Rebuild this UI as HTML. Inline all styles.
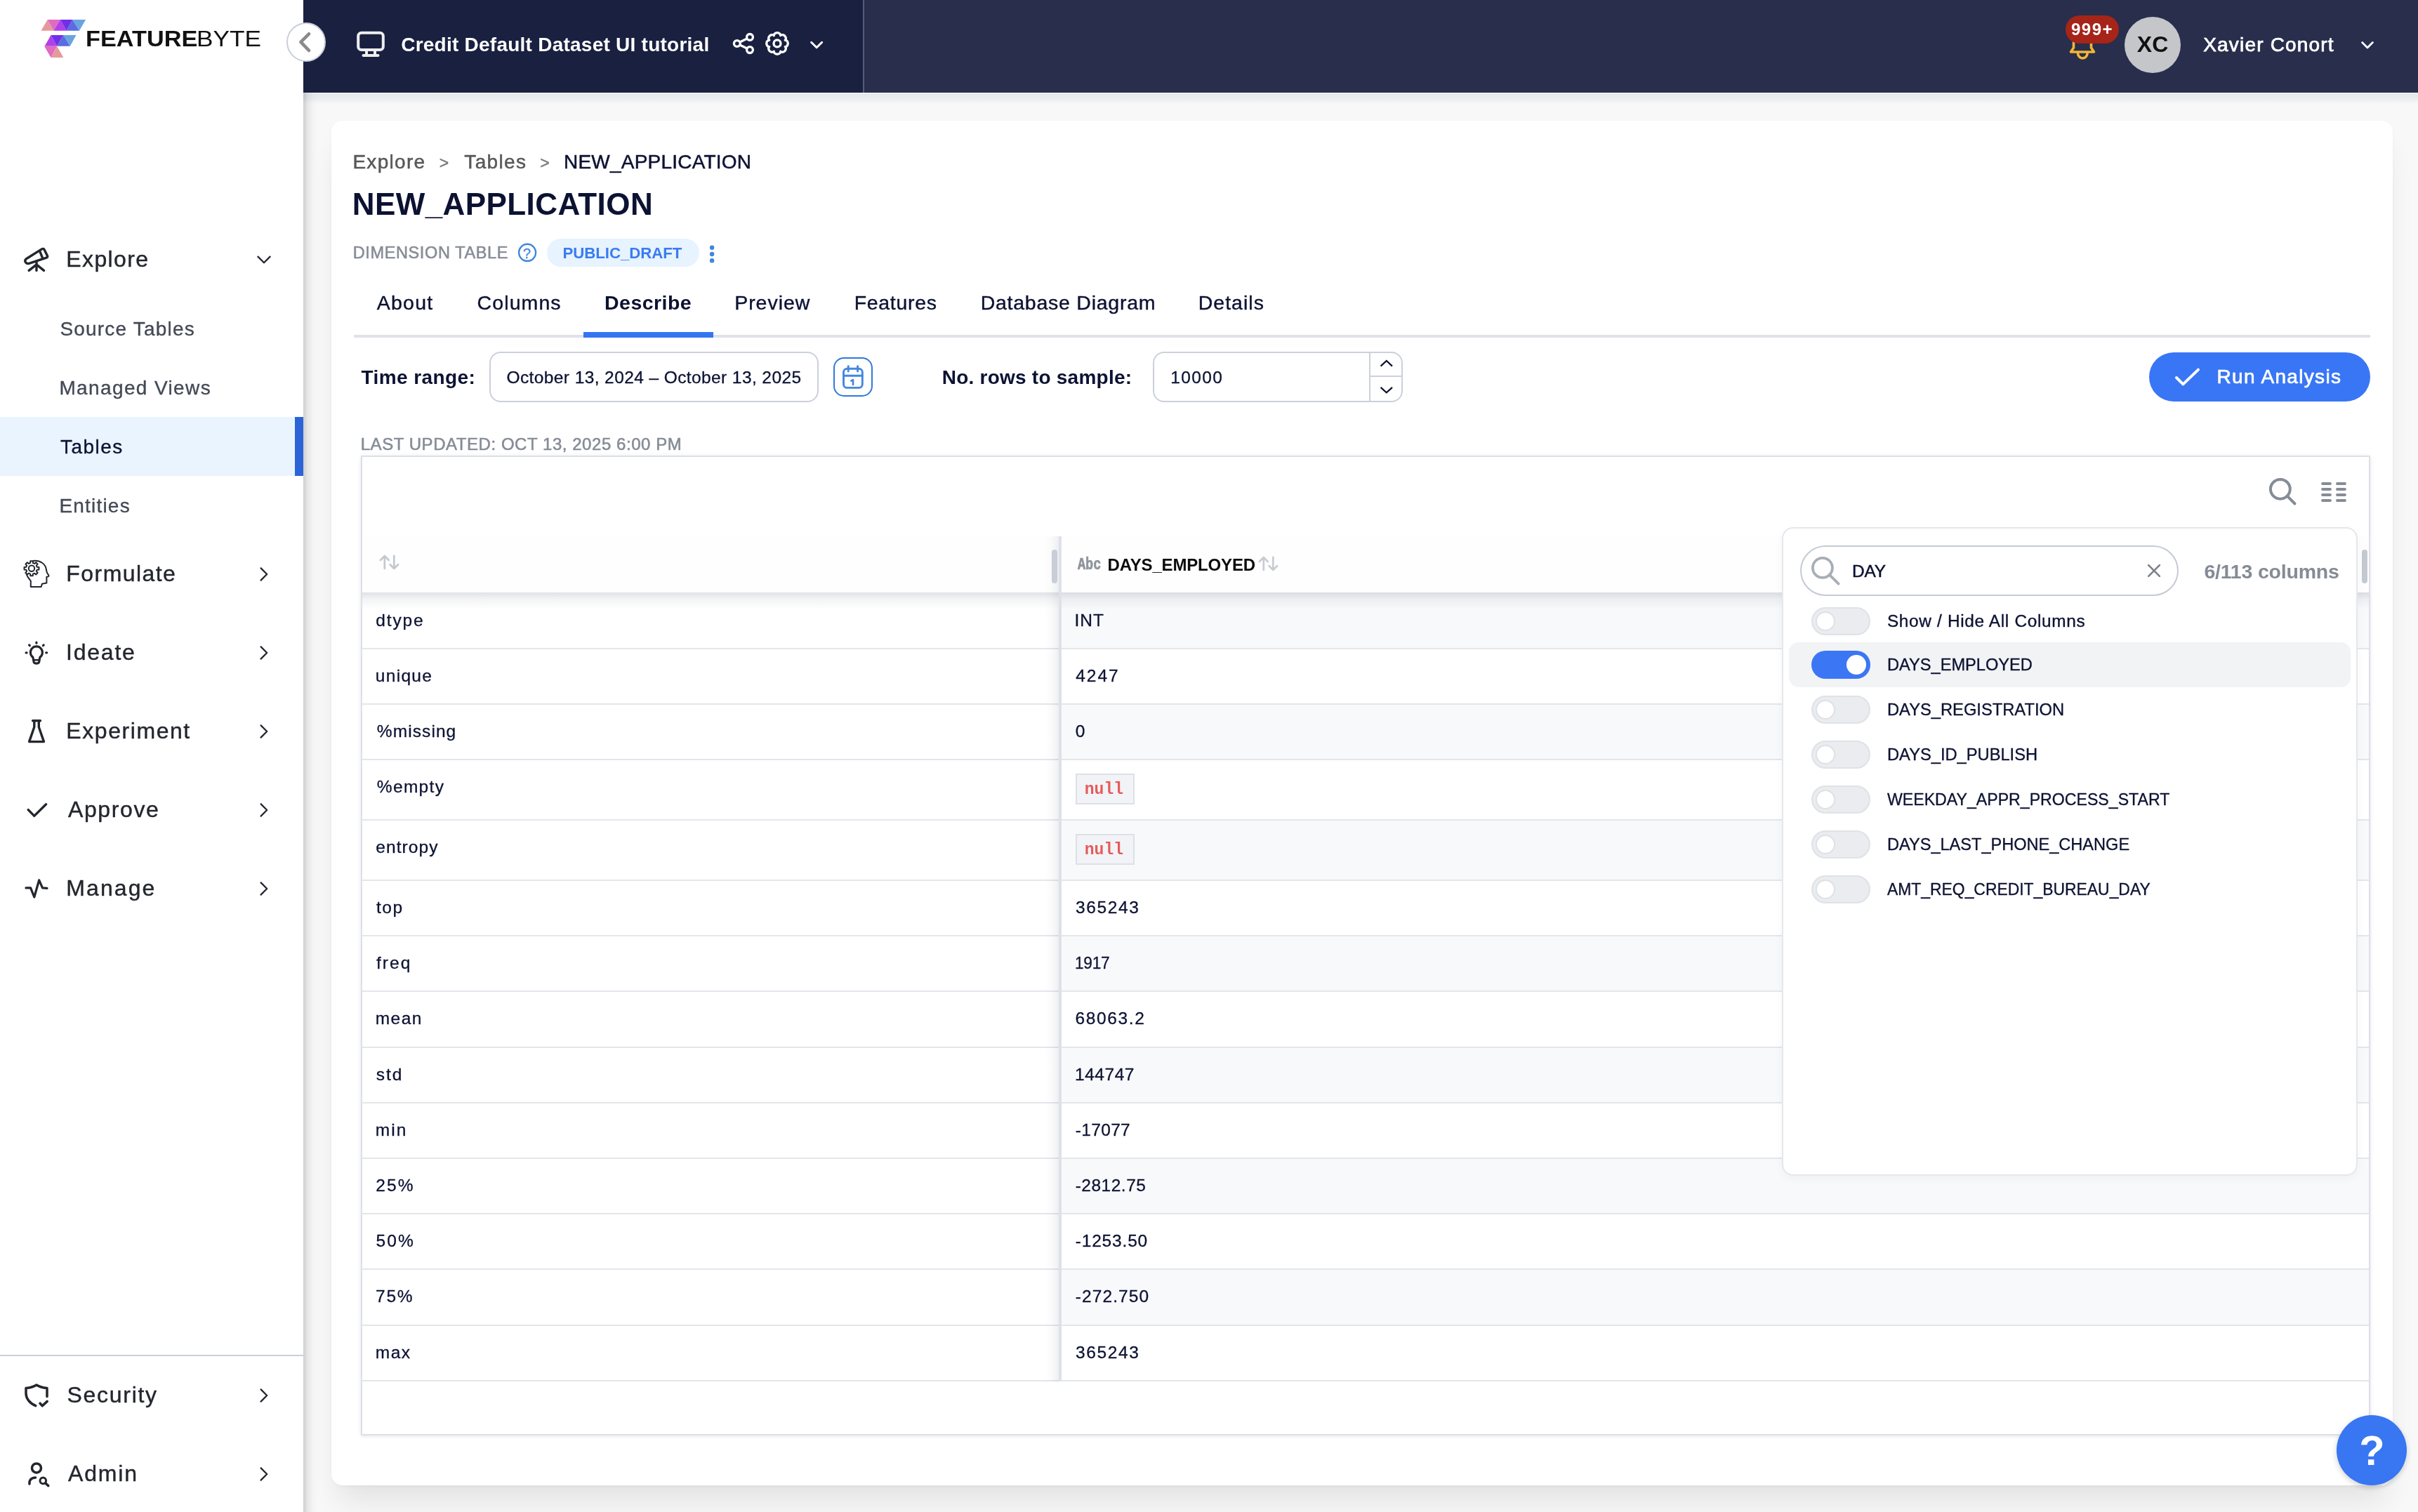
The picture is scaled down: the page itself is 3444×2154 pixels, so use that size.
<!DOCTYPE html>
<html><head><meta charset="utf-8"><title>NEW_APPLICATION</title>
<style>
html,body{margin:0;padding:0;}
body{width:3444px;height:2154px;overflow:hidden;background:#f8f8f8;position:relative;font-family:"Liberation Sans",sans-serif;}
.b{position:absolute;box-sizing:border-box;}
.t{position:absolute;white-space:nowrap;margin:0;padding:0;}
svg{overflow:visible;}
</style></head><body>
<div id="app" style="position:absolute;left:0;top:0;width:3444px;height:2154px;will-change:transform;">
<div class="b" style="left:432px;top:132px;width:3012px;height:16px;background:linear-gradient(to bottom,#e5e7ec 0%,#e9ebef 45%,#f8f8f8 100%);"></div>
<div class="b" style="left:432px;top:132px;width:3012px;height:1px;background:#fbfbfc;"></div>
<div class="b" style="left:472px;top:172px;width:2936px;height:1944px;background:#fff;border-radius:16px;box-shadow:0 2px 6px rgba(0,0,0,0.04),0 32px 42px -10px rgba(0,0,0,0.09);"></div>
<div class="b" style="left:432px;top:132px;width:20px;height:2022px;background:linear-gradient(to right,rgba(0,0,0,0.17) 0%,rgba(0,0,0,0.07) 30%,rgba(0,0,0,0.02) 65%,rgba(0,0,0,0) 100%);"></div>
<div class="b" style="left:432px;top:0px;width:797px;height:132px;background:#1a2040;"></div>
<div class="b" style="left:1229px;top:0px;width:2px;height:132px;background:#565c75;"></div>
<div class="b" style="left:1231px;top:0px;width:2213px;height:132px;background:#282e4c;"></div>
<svg class="b" style="left:500px;top:40px;" width="56" height="48" viewBox="0 0 56 48" fill="none"><rect x="10.2" y="6.8" width="35.6" height="24.2" rx="4.5" stroke="#eee" stroke-width="4"/><path d="M22 31v7M34 31v7" stroke="#eee" stroke-width="4"/><path d="M17.5 39.1h21" stroke="#eee" stroke-width="4" stroke-linecap="round"/></svg>
<div class="t" style="left:571.18px;top:46.80px;font-size:28px;line-height:34px;color:#fff;font-family:'Liberation Sans', sans-serif;font-weight:700;letter-spacing:0.245px;">Credit Default Dataset UI tutorial</div>
<svg class="b" style="left:1040px;top:44px;" width="40" height="40" viewBox="0 0 40 40" fill="none"><g stroke="#fff" stroke-width="3.3"><circle cx="9.8" cy="18" r="4.4"/><circle cx="28" cy="8.9" r="4.4"/><circle cx="28" cy="27.1" r="4.4"/><path d="M13.8 16 L24 10.9M13.8 20 L24 25.1"/></g></svg>
<svg class="b" style="left:1087px;top:42px;" width="40" height="40" viewBox="0 0 40 40" fill="none"><path d="M20.00 4.70 L20.50 4.72 L20.99 4.79 L21.48 4.90 L21.95 5.06 L22.42 5.26 L22.86 5.50 L23.29 5.80 L23.69 6.14 L24.05 6.53 L24.38 7.00 L24.64 7.57 L24.67 8.63 L25.44 7.90 L26.03 7.68 L26.58 7.58 L27.12 7.56 L27.65 7.60 L28.16 7.69 L28.64 7.84 L29.11 8.02 L29.56 8.25 L29.98 8.51 L30.38 8.82 L30.75 9.15 L31.08 9.52 L31.39 9.92 L31.65 10.34 L31.88 10.79 L32.06 11.26 L32.21 11.74 L32.30 12.25 L32.34 12.78 L32.32 13.32 L32.22 13.87 L32.00 14.46 L31.27 15.23 L32.33 15.26 L32.90 15.52 L33.37 15.85 L33.76 16.21 L34.10 16.61 L34.40 17.04 L34.64 17.48 L34.84 17.95 L35.00 18.42 L35.11 18.91 L35.18 19.40 L35.20 19.90 L35.18 20.40 L35.11 20.89 L35.00 21.38 L34.84 21.85 L34.64 22.32 L34.40 22.76 L34.10 23.19 L33.76 23.59 L33.37 23.95 L32.90 24.28 L32.33 24.54 L31.27 24.57 L32.00 25.34 L32.22 25.93 L32.32 26.48 L32.34 27.02 L32.30 27.55 L32.21 28.06 L32.06 28.54 L31.88 29.01 L31.65 29.46 L31.39 29.88 L31.08 30.28 L30.75 30.65 L30.38 30.98 L29.98 31.29 L29.56 31.55 L29.11 31.78 L28.64 31.96 L28.16 32.11 L27.65 32.20 L27.12 32.24 L26.58 32.22 L26.03 32.12 L25.44 31.90 L24.67 31.17 L24.64 32.23 L24.38 32.80 L24.05 33.27 L23.69 33.66 L23.29 34.00 L22.86 34.30 L22.42 34.54 L21.95 34.74 L21.48 34.90 L20.99 35.01 L20.50 35.08 L20.00 35.10 L19.50 35.08 L19.01 35.01 L18.52 34.90 L18.05 34.74 L17.58 34.54 L17.14 34.30 L16.71 34.00 L16.31 33.66 L15.95 33.27 L15.62 32.80 L15.36 32.23 L15.33 31.17 L14.56 31.90 L13.97 32.12 L13.42 32.22 L12.88 32.24 L12.35 32.20 L11.84 32.11 L11.36 31.96 L10.89 31.78 L10.44 31.55 L10.02 31.29 L9.62 30.98 L9.25 30.65 L8.92 30.28 L8.61 29.88 L8.35 29.46 L8.12 29.01 L7.94 28.54 L7.79 28.06 L7.70 27.55 L7.66 27.02 L7.68 26.48 L7.78 25.93 L8.00 25.34 L8.73 24.57 L7.67 24.54 L7.10 24.28 L6.63 23.95 L6.24 23.59 L5.90 23.19 L5.60 22.76 L5.36 22.32 L5.16 21.85 L5.00 21.38 L4.89 20.89 L4.82 20.40 L4.80 19.90 L4.82 19.40 L4.89 18.91 L5.00 18.42 L5.16 17.95 L5.36 17.48 L5.60 17.04 L5.90 16.61 L6.24 16.21 L6.63 15.85 L7.10 15.52 L7.67 15.26 L8.73 15.23 L8.00 14.46 L7.78 13.87 L7.68 13.32 L7.66 12.78 L7.70 12.25 L7.79 11.74 L7.94 11.26 L8.12 10.79 L8.35 10.34 L8.61 9.92 L8.92 9.52 L9.25 9.15 L9.62 8.82 L10.02 8.51 L10.44 8.25 L10.89 8.02 L11.36 7.84 L11.84 7.69 L12.35 7.60 L12.88 7.56 L13.42 7.58 L13.97 7.68 L14.56 7.90 L15.33 8.63 L15.36 7.57 L15.62 7.00 L15.95 6.53 L16.31 6.14 L16.71 5.80 L17.14 5.50 L17.58 5.26 L18.05 5.06 L18.52 4.90 L19.01 4.79 L19.50 4.72Z" stroke="#fff" stroke-width="3.3" stroke-linejoin="round"/><circle cx="20" cy="19.9" r="5" stroke="#fff" stroke-width="3.3"/></svg>
<svg class="b" style="left:1150px;top:54px;" width="28" height="20" viewBox="0 0 28 20" fill="none"><path d="M5.6 6.3 L13.15 13.7 L20.7 6.3" stroke="#fff" stroke-width="3" stroke-linecap="round" stroke-linejoin="round"/></svg>
<svg class="b" style="left:2940px;top:40px;" width="52" height="50" viewBox="0 0 52 50" fill="none"><g stroke="#f2b534" stroke-width="3.6" stroke-linejoin="round" stroke-linecap="round"><path d="M13.5 20 V28 L9.5 34 H42.5 L38.5 28 V20"/><path d="M19.5 35.5 a6.8 7.5 0 0 0 13.6 0"/></g></svg>
<div class="b" style="left:2942px;top:22px;width:76px;height:40px;background:#a62418;border-radius:20px;"></div>
<div class="t" style="left:2949.96px;top:26.70px;font-size:24px;line-height:29px;color:#fff;font-family:'Liberation Sans', sans-serif;font-weight:700;letter-spacing:1.500px;">999+</div>
<div class="b" style="left:3026px;top:24px;width:80px;height:80px;background:#c5c6ca;border-radius:50%;"></div>
<div class="t" style="left:3043.68px;top:44.40px;font-size:32px;line-height:39px;color:#111;font-family:'Liberation Sans', sans-serif;font-weight:700;letter-spacing:0.220px;">XC</div>
<div class="t" style="left:3138.17px;top:47.20px;font-size:28px;line-height:34px;color:#fff;font-family:'Liberation Sans', sans-serif;letter-spacing:1.191px;-webkit-text-stroke:0.75px #fff;">Xavier Conort</div>
<svg class="b" style="left:3358px;top:54px;" width="28" height="20" viewBox="0 0 28 20" fill="none"><path d="M6.6 6.6 L14 13.9 L21.4 6.6" stroke="#fff" stroke-width="2.8" stroke-linecap="round" stroke-linejoin="round"/></svg>
<div class="b" style="left:0px;top:0px;width:432px;height:2154px;background:#fff;"></div>
<svg class="b" style="left:0px;top:0px;" width="140" height="100" viewBox="0 0 140 100" fill="none"><polygon points="58.5,43.7 67.7,28.1 76.5,43.7" fill="#e59a9a"/><polygon points="67.7,28.1 85.7,28.1 76.5,43.7" fill="#e06bc0"/><polygon points="76.5,43.7 85.7,28.1 94.7,43.7" fill="#b040e8"/><polygon points="85.7,28.1 103.5,28.1 94.7,43.7" fill="#7030e8"/><polygon points="94.7,43.7 103.5,28.1 113,43.7" fill="#5b6be0"/><polygon points="103.5,28.1 122,28.1 113,43.7" fill="#68a4e0"/><polygon points="63.6,65.7 72.5,50.1 81.1,65.7" fill="#b040e8"/><polygon points="72.5,50.1 90.5,50.1 81.1,65.7" fill="#7030e8"/><polygon points="81.1,65.7 90.5,50.1 99.8,65.7" fill="#5b6be0"/><polygon points="90.5,50.1 108.5,50.1 99.8,65.7" fill="#68a4e0"/><polygon points="63.1,65.7 81.1,65.7 72.5,81.9" fill="#e06bc0"/><polygon points="72.5,81.9 81.1,65.7 90.4,81.9" fill="#e59a9a"/></svg>
<div class="t" style="left:121.91px;top:36.50px;font-size:31px;line-height:38px;color:#111;font-family:'Liberation Sans', sans-serif;font-weight:700;transform:scaleX(1.1056);transform-origin:0 0;">FEATURE</div>
<div class="t" style="left:280.24px;top:36.50px;font-size:31px;line-height:38px;color:#111;font-family:'Liberation Sans', sans-serif;transform:scaleX(1.1360);transform-origin:0 0;">BYTE</div>
<div class="b" style="left:408px;top:32px;width:56px;height:56px;background:#fff;border:2px solid #c8cfda;border-radius:50%;"></div>
<svg class="b" style="left:408px;top:32px;" width="56" height="56" viewBox="0 0 56 56" fill="none"><path d="M32 16.3 L20.4 27.9 L32 39.9" stroke="#8a8a8a" stroke-width="4.6" stroke-linecap="round" stroke-linejoin="round"/></svg>
<div class="t" style="left:94.36px;top:350.40px;font-size:32px;line-height:39px;color:#23262d;font-family:'Liberation Sans', sans-serif;letter-spacing:1.370px;-webkit-text-stroke:0.4px #23262d;">Explore</div>
<svg class="b" style="left:362px;top:360px;" width="28" height="20" viewBox="0 0 28 20" fill="none"><path d="M5.4 5.6 L14 14.2 L22.6 5.6" stroke="#23262d" stroke-width="2.3" stroke-linecap="round" stroke-linejoin="round"/></svg>
<svg class="b" style="left:30px;top:348px;" width="44" height="44" viewBox="0 0 44 44" fill="none"><g stroke="#23262d" stroke-width="3.4" stroke-linejoin="round" stroke-linecap="round" transform="translate(-30,-348)"><path d="M37.4 368.8 L59.5 354.9 Q62 353.5 63.3 356 L67.4 364.2 Q68.4 366.3 66.1 367.1 L42 375.2 Q37.8 376.4 36.1 373 Q35 370.4 37.4 368.8Z"/><path d="M56.6 357.6 L60.6 367.6"/><path d="M52 372.6 V385.4M52 376.9 L41.2 385.4M52 376.9 L62.5 385.4"/></g></svg>
<div class="b" style="left:0px;top:594px;width:432px;height:84px;background:#e9f4fe;"></div>
<div class="b" style="left:420px;top:594px;width:12px;height:84px;background:#2c64d8;"></div>
<div class="t" style="left:85.44px;top:451.50px;font-size:28px;line-height:34px;color:#434955;font-family:'Liberation Sans', sans-serif;letter-spacing:1.190px;-webkit-text-stroke:0.35px #434955;">Source Tables</div>
<div class="t" style="left:84.39px;top:535.50px;font-size:28px;line-height:34px;color:#434955;font-family:'Liberation Sans', sans-serif;letter-spacing:1.380px;-webkit-text-stroke:0.35px #434955;">Managed Views</div>
<div class="t" style="left:86.07px;top:619.50px;font-size:28px;line-height:34px;color:#0c1232;font-family:'Liberation Sans', sans-serif;letter-spacing:1.438px;-webkit-text-stroke:0.35px #0c1232;">Tables</div>
<div class="t" style="left:84.39px;top:703.50px;font-size:28px;line-height:34px;color:#434955;font-family:'Liberation Sans', sans-serif;letter-spacing:1.207px;-webkit-text-stroke:0.35px #434955;">Entities</div>
<div class="t" style="left:94.36px;top:798.20px;font-size:32px;line-height:39px;color:#23262d;font-family:'Liberation Sans', sans-serif;letter-spacing:1.438px;-webkit-text-stroke:0.4px #23262d;">Formulate</div>
<svg class="b" style="left:366px;top:806px;" width="20" height="24" viewBox="0 0 20 24" fill="none"><path d="M5.6 3.4 L14.2 12 L5.6 20.6" stroke="#23262d" stroke-width="2.3" stroke-linecap="round" stroke-linejoin="round"/></svg>
<div class="t" style="left:94.04px;top:910.20px;font-size:32px;line-height:39px;color:#23262d;font-family:'Liberation Sans', sans-serif;letter-spacing:1.772px;-webkit-text-stroke:0.4px #23262d;">Ideate</div>
<svg class="b" style="left:366px;top:918px;" width="20" height="24" viewBox="0 0 20 24" fill="none"><path d="M5.6 3.4 L14.2 12 L5.6 20.6" stroke="#23262d" stroke-width="2.3" stroke-linecap="round" stroke-linejoin="round"/></svg>
<div class="t" style="left:94.36px;top:1022.20px;font-size:32px;line-height:39px;color:#23262d;font-family:'Liberation Sans', sans-serif;letter-spacing:1.560px;-webkit-text-stroke:0.4px #23262d;">Experiment</div>
<svg class="b" style="left:366px;top:1030px;" width="20" height="24" viewBox="0 0 20 24" fill="none"><path d="M5.6 3.4 L14.2 12 L5.6 20.6" stroke="#23262d" stroke-width="2.3" stroke-linecap="round" stroke-linejoin="round"/></svg>
<div class="t" style="left:96.92px;top:1134.20px;font-size:32px;line-height:39px;color:#23262d;font-family:'Liberation Sans', sans-serif;letter-spacing:1.637px;-webkit-text-stroke:0.4px #23262d;">Approve</div>
<svg class="b" style="left:366px;top:1142px;" width="20" height="24" viewBox="0 0 20 24" fill="none"><path d="M5.6 3.4 L14.2 12 L5.6 20.6" stroke="#23262d" stroke-width="2.3" stroke-linecap="round" stroke-linejoin="round"/></svg>
<div class="t" style="left:94.36px;top:1246.20px;font-size:32px;line-height:39px;color:#23262d;font-family:'Liberation Sans', sans-serif;letter-spacing:2.080px;-webkit-text-stroke:0.4px #23262d;">Manage</div>
<svg class="b" style="left:366px;top:1254px;" width="20" height="24" viewBox="0 0 20 24" fill="none"><path d="M5.6 3.4 L14.2 12 L5.6 20.6" stroke="#23262d" stroke-width="2.3" stroke-linecap="round" stroke-linejoin="round"/></svg>
<div class="t" style="left:95.56px;top:1968.20px;font-size:32px;line-height:39px;color:#23262d;font-family:'Liberation Sans', sans-serif;letter-spacing:1.703px;-webkit-text-stroke:0.4px #23262d;">Security</div>
<svg class="b" style="left:366px;top:1976px;" width="20" height="24" viewBox="0 0 20 24" fill="none"><path d="M5.6 3.4 L14.2 12 L5.6 20.6" stroke="#23262d" stroke-width="2.3" stroke-linecap="round" stroke-linejoin="round"/></svg>
<div class="t" style="left:96.92px;top:2080.20px;font-size:32px;line-height:39px;color:#23262d;font-family:'Liberation Sans', sans-serif;letter-spacing:1.880px;-webkit-text-stroke:0.4px #23262d;">Admin</div>
<svg class="b" style="left:366px;top:2088px;" width="20" height="24" viewBox="0 0 20 24" fill="none"><path d="M5.6 3.4 L14.2 12 L5.6 20.6" stroke="#23262d" stroke-width="2.3" stroke-linecap="round" stroke-linejoin="round"/></svg>
<div class="b" style="left:0px;top:1930px;width:432px;height:2px;background:#c9d0da;"></div>
<svg class="b" style="left:30px;top:794px;" width="44" height="48" viewBox="0 0 44 48" fill="none"><g stroke="#23262d" stroke-linejoin="round" stroke-linecap="round" stroke-width="2" transform="translate(-30,-794)"><path d="M47.5 799 C57 798 65 803 66 812 L66.8 815.5 L69.4 819.7 Q69.8 821 68.4 821.4 L66.4 821.8 V830.6 L59.9 831.8 L58.7 836 H43.8 V827.6 C41 824 38.5 821 37.9 818.2"/><path d="M43.07 802.04 L43.26 799.34 L46.74 799.34 L46.93 802.04 L49.13 802.95 L51.16 801.18 L53.62 803.64 L51.85 805.67 L52.76 807.87 L55.46 808.06 L55.46 811.54 L52.76 811.73 L51.85 813.93 L53.62 815.96 L51.16 818.42 L49.13 816.65 L46.93 817.56 L46.74 820.26 L43.26 820.26 L43.07 817.56 L40.87 816.65 L38.84 818.42 L36.38 815.96 L38.15 813.93 L37.24 811.73 L34.54 811.54 L34.54 808.06 L37.24 807.87 L38.15 805.67 L36.38 803.64 L38.84 801.18 L40.87 802.95Z"/><circle cx="45" cy="809.8" r="4.2"/></g></svg>
<svg class="b" style="left:30px;top:908px;" width="44" height="44" viewBox="0 0 44 44" fill="none"><g stroke="#23262d" stroke-linejoin="round" stroke-linecap="round" stroke-width="3.2" transform="translate(-30,-908)"><path d="M46.9 936.3 A8.5 8.5 0 1 1 56.9 936.3 L55.7 943 Q55.3 945.1 51.9 945.1 Q48.5 945.1 48.1 943 Z"/><path d="M48.4 940.2 H55.4" stroke-width="2.6"/><path d="M51.9 915.2 V916.2M41.6 918.9 L42.4 919.7M62.2 918.9 L61.4 919.7M37.1 929.9 H38.1M65.7 929.8 H66.7"/></g></svg>
<svg class="b" style="left:30px;top:1020px;" width="44" height="44" viewBox="0 0 44 44" fill="none"><g stroke="#23262d" stroke-linejoin="round" stroke-linecap="round" stroke-width="3.4" transform="translate(-30,-1020)"><path d="M46.6 1026.8 H57.5"/><path d="M48.8 1027 V1035.7 L41.6 1056.6 H62.5 L55.3 1035.7 V1027"/></g></svg>
<svg class="b" style="left:30px;top:1134px;" width="44" height="40" viewBox="0 0 44 40" fill="none"><g stroke="#23262d" stroke-linejoin="round" stroke-linecap="round" stroke-width="3.4" transform="translate(-30,-1134)"><path d="M40.2 1153.6 L48.8 1162.4 L65.6 1145.8"/></g></svg>
<svg class="b" style="left:30px;top:1246px;" width="44" height="40" viewBox="0 0 44 40" fill="none"><g stroke="#23262d" stroke-linejoin="round" stroke-linecap="round" stroke-width="3.2" transform="translate(-30,-1246)"><path d="M37 1264.9 H43.6 L48.8 1278 L55.7 1253.8 L60.5 1264.9 L67 1265.3"/></g></svg>
<svg class="b" style="left:30px;top:1966px;" width="44" height="44" viewBox="0 0 44 44" fill="none"><g stroke="#23262d" stroke-linejoin="round" stroke-linecap="round" stroke-width="3.5" transform="translate(-30,-1966)"><path d="M50.8 2002.6 C42 1999 37 1992 37 1985 V1977.4 C43 1977 48 1975.6 52 1973 C56 1975.6 61 1977 67 1977.4 V1989.6"/><path d="M57 1999.2 L60.3 2002.8 L67.2 1996.4"/></g></svg>
<svg class="b" style="left:30px;top:2078px;" width="48" height="44" viewBox="0 0 48 44" fill="none"><g stroke="#23262d" stroke-linejoin="round" stroke-linecap="round" stroke-width="3.5" transform="translate(-30,-2078)"><circle cx="52" cy="2091.4" r="6.5"/><path d="M42 2114 C41.4 2108 45 2105 50.6 2104.9"/><circle cx="61.3" cy="2109.4" r="4.3" stroke-width="3"/><path d="M64.6 2112.8 L68.8 2116.6"/></g></svg>
<div class="t" style="left:502.39px;top:213.90px;font-size:28px;line-height:34px;color:#585858;font-family:'Liberation Sans', sans-serif;letter-spacing:1.313px;-webkit-text-stroke:0.5px #585858;">Explore</div>
<div class="t" style="left:625.65px;top:217.60px;font-size:23px;line-height:28px;color:#7a7a7a;font-family:'Liberation Sans', sans-serif;-webkit-text-stroke:0.4px #7a7a7a;">&gt;</div>
<div class="t" style="left:661.37px;top:213.90px;font-size:28px;line-height:34px;color:#585858;font-family:'Liberation Sans', sans-serif;letter-spacing:1.338px;-webkit-text-stroke:0.5px #585858;">Tables</div>
<div class="t" style="left:769.35px;top:217.60px;font-size:23px;line-height:28px;color:#7a7a7a;font-family:'Liberation Sans', sans-serif;-webkit-text-stroke:0.4px #7a7a7a;">&gt;</div>
<div class="t" style="left:802.99px;top:213.90px;font-size:28px;line-height:34px;color:#0c1232;font-family:'Liberation Sans', sans-serif;letter-spacing:0.218px;-webkit-text-stroke:0.5px #0c1232;">NEW_APPLICATION</div>
<div class="t" style="left:501.73px;top:263.60px;font-size:44px;line-height:53px;color:#0c1232;font-family:'Liberation Sans', sans-serif;font-weight:700;letter-spacing:0.419px;">NEW_APPLICATION</div>
<div class="t" style="left:502.76px;top:346.00px;font-size:23.5px;line-height:29px;color:#868c96;font-family:'Liberation Sans', sans-serif;letter-spacing:0.619px;-webkit-text-stroke:0.55px #868c96;">DIMENSION TABLE</div>
<svg class="b" style="left:736px;top:345px;" width="30" height="30" viewBox="0 0 30 30" fill="none"><circle cx="15.1" cy="14.8" r="12" stroke="#3f85dd" stroke-width="2.4"/></svg>
<div class="t" style="left:745.00px;top:348.50px;font-size:20px;line-height:24px;color:#3f85dd;font-family:'Liberation Sans', sans-serif;-webkit-text-stroke:0.3px #3f85dd;">?</div>
<div class="b" style="left:779px;top:340px;width:217px;height:40px;background:#e7f3fe;border-radius:20px;"></div>
<div class="t" style="left:801.59px;top:346.70px;font-size:22.3px;line-height:27px;color:#3a7cf0;font-family:'Liberation Sans', sans-serif;font-weight:700;letter-spacing:-0.100px;">PUBLIC_DRAFT</div>
<svg class="b" style="left:1006px;top:346px;" width="16" height="32" viewBox="0 0 16 32" fill="none"><circle cx="8.1" cy="6.8" r="3.2" fill="#4285dc"/><circle cx="8.1" cy="16" r="3.2" fill="#4285dc"/><circle cx="8.1" cy="25.3" r="3.2" fill="#4285dc"/></svg>
<div class="t" style="left:536.73px;top:413.90px;font-size:28.5px;line-height:35px;color:#0c1232;font-family:'Liberation Sans', sans-serif;letter-spacing:1.257px;-webkit-text-stroke:0.4px #0c1232;">About</div>
<div class="t" style="left:679.58px;top:413.90px;font-size:28.5px;line-height:35px;color:#0c1232;font-family:'Liberation Sans', sans-serif;letter-spacing:1.098px;-webkit-text-stroke:0.4px #0c1232;">Columns</div>
<div class="t" style="left:861.08px;top:413.90px;font-size:28.5px;line-height:35px;color:#0c1232;font-family:'Liberation Sans', sans-serif;font-weight:700;letter-spacing:0.444px;">Describe</div>
<div class="t" style="left:1046.15px;top:413.90px;font-size:28.5px;line-height:35px;color:#0c1232;font-family:'Liberation Sans', sans-serif;letter-spacing:0.982px;-webkit-text-stroke:0.4px #0c1232;">Preview</div>
<div class="t" style="left:1216.65px;top:413.90px;font-size:28.5px;line-height:35px;color:#0c1232;font-family:'Liberation Sans', sans-serif;letter-spacing:0.692px;-webkit-text-stroke:0.4px #0c1232;">Features</div>
<div class="t" style="left:1396.65px;top:413.90px;font-size:28.5px;line-height:35px;color:#0c1232;font-family:'Liberation Sans', sans-serif;letter-spacing:0.752px;-webkit-text-stroke:0.4px #0c1232;">Database Diagram</div>
<div class="t" style="left:1706.65px;top:413.90px;font-size:28.5px;line-height:35px;color:#0c1232;font-family:'Liberation Sans', sans-serif;letter-spacing:1.035px;-webkit-text-stroke:0.4px #0c1232;">Details</div>
<div class="b" style="left:504px;top:477px;width:2872px;height:4px;background:#dfe2e8;"></div>
<div class="b" style="left:831px;top:473px;width:185px;height:8px;background:#3575f0;"></div>
<div class="t" style="left:514.45px;top:520.50px;font-size:28px;line-height:34px;color:#0c1232;font-family:'Liberation Sans', sans-serif;font-weight:700;letter-spacing:0.431px;">Time range:</div>
<div class="b" style="left:697px;top:501px;width:469px;height:72px;border:2px solid #cbd0da;border-radius:16px;background:#fff;"></div>
<div class="t" style="left:721.44px;top:522.70px;font-size:24.5px;line-height:30px;color:#0c1232;font-family:'Liberation Sans', sans-serif;letter-spacing:0.404px;-webkit-text-stroke:0.3px #0c1232;">October 13, 2024 – October 13, 2025</div>
<div class="b" style="left:1187px;top:509px;width:56px;height:56px;border:2px solid #3079db;border-radius:15px;background:#fff;"></div>
<svg class="b" style="left:1187px;top:509px;" width="56" height="56" viewBox="0 0 56 56" fill="none"><g stroke="#4487e0" stroke-width="2.9" stroke-linecap="round" stroke-linejoin="round"><rect x="14.5" y="16.2" width="26.8" height="27.2" rx="5"/><path d="M14.5 26.2 H41.3M21.2 12.8 V20.1M34.6 12.8 V20.1"/><path d="M25.4 33.4 L28 32.2 V39" stroke-width="2.7"/></g></svg>
<div class="t" style="left:1341.71px;top:520.50px;font-size:28px;line-height:34px;color:#0c1232;font-family:'Liberation Sans', sans-serif;font-weight:700;letter-spacing:0.238px;">No. rows to sample:</div>
<div class="b" style="left:1642px;top:501px;width:356px;height:72px;border:2px solid #cbd0da;border-radius:16px;background:#fff;"></div>
<div class="b" style="left:1950px;top:503px;width:2px;height:68px;background:#cbd0da;"></div>
<div class="b" style="left:1952px;top:535px;width:44px;height:2px;background:#cbd0da;"></div>
<div class="t" style="left:1667.16px;top:522.70px;font-size:24.5px;line-height:30px;color:#0c1232;font-family:'Liberation Sans', sans-serif;letter-spacing:1.412px;-webkit-text-stroke:0.3px #0c1232;">10000</div>
<svg class="b" style="left:1960px;top:506px;" width="30" height="24" viewBox="0 0 30 24" fill="none"><path d="M6.6 15.6 L14.8 8 L23 15.6" stroke="#0b0f2e" stroke-width="2.2" stroke-linejoin="miter"/></svg>
<svg class="b" style="left:1960px;top:544px;" width="30" height="24" viewBox="0 0 30 24" fill="none"><path d="M6.6 7.9 L14.8 15.3 L23 7.9" stroke="#0b0f2e" stroke-width="2.2" stroke-linejoin="miter"/></svg>
<div class="b" style="left:3061px;top:502px;width:315px;height:70px;background:#3876f5;border-radius:35px;"></div>
<svg class="b" style="left:3094px;top:518px;" width="44" height="38" viewBox="0 0 44 38" fill="none"><path d="M6 20 L15.4 29.4 L37 8.6" stroke="#fff" stroke-width="4" stroke-linecap="round" stroke-linejoin="round"/></svg>
<div class="t" style="left:3157.49px;top:520.10px;font-size:28px;line-height:34px;color:#fff;font-family:'Liberation Sans', sans-serif;letter-spacing:1.332px;-webkit-text-stroke:0.7px #fff;">Run Analysis</div>
<div class="t" style="left:513.72px;top:617.80px;font-size:24px;line-height:29px;color:#858c96;font-family:'Liberation Sans', sans-serif;letter-spacing:0.549px;-webkit-text-stroke:0.55px #858c96;">LAST UPDATED: OCT 13, 2025 6:00 PM</div>
<div class="b" style="left:514px;top:649px;width:2862px;height:1396px;border:2px solid #dde0e7;background:#fff;box-shadow:0 0 7px rgba(0,0,0,0.06),0 2px 4px rgba(0,0,0,0.05);"></div>
<div class="b" style="left:516px;top:764px;width:2858px;height:80px;background:#fefefe;"></div>
<div class="b" style="left:1512px;top:844px;width:1862px;height:79px;background:#f8f9fb;"></div>
<div class="b" style="left:516px;top:923px;width:2858px;height:2px;background:#e3e6eb;"></div>
<div class="b" style="left:516px;top:1002px;width:2858px;height:2px;background:#e3e6eb;"></div>
<div class="b" style="left:1512px;top:1004px;width:1862px;height:77px;background:#f8f9fb;"></div>
<div class="b" style="left:516px;top:1081px;width:2858px;height:2px;background:#e3e6eb;"></div>
<div class="b" style="left:516px;top:1167px;width:2858px;height:2px;background:#e3e6eb;"></div>
<div class="b" style="left:1512px;top:1169px;width:1862px;height:84px;background:#f8f9fb;"></div>
<div class="b" style="left:516px;top:1253px;width:2858px;height:2px;background:#e3e6eb;"></div>
<div class="b" style="left:516px;top:1332px;width:2858px;height:2px;background:#e3e6eb;"></div>
<div class="b" style="left:1512px;top:1334px;width:1862px;height:77px;background:#f8f9fb;"></div>
<div class="b" style="left:516px;top:1411px;width:2858px;height:2px;background:#e3e6eb;"></div>
<div class="b" style="left:516px;top:1491px;width:2858px;height:2px;background:#e3e6eb;"></div>
<div class="b" style="left:1512px;top:1493px;width:1862px;height:77px;background:#f8f9fb;"></div>
<div class="b" style="left:516px;top:1570px;width:2858px;height:2px;background:#e3e6eb;"></div>
<div class="b" style="left:516px;top:1649px;width:2858px;height:2px;background:#e3e6eb;"></div>
<div class="b" style="left:1512px;top:1651px;width:1862px;height:77px;background:#f8f9fb;"></div>
<div class="b" style="left:516px;top:1728px;width:2858px;height:2px;background:#e3e6eb;"></div>
<div class="b" style="left:516px;top:1807px;width:2858px;height:2px;background:#e3e6eb;"></div>
<div class="b" style="left:1512px;top:1809px;width:1862px;height:78px;background:#f8f9fb;"></div>
<div class="b" style="left:516px;top:1887px;width:2858px;height:2px;background:#e3e6eb;"></div>
<div class="b" style="left:516px;top:1966px;width:2858px;height:2px;background:#e3e6eb;"></div>
<div class="b" style="left:516px;top:844px;width:2858px;height:24px;background:linear-gradient(to bottom,rgba(20,30,60,0.13) 0%,rgba(20,30,60,0.05) 40%,rgba(20,30,60,0) 100%);"></div>
<div class="b" style="left:1488px;top:764px;width:20px;height:1204px;background:linear-gradient(to right,rgba(20,30,60,0) 0%,rgba(20,30,60,0.02) 50%,rgba(20,30,60,0.07) 100%);"></div>
<div class="b" style="left:1508px;top:764px;width:4px;height:1204px;background:#dee1e8;"></div>
<div class="b" style="left:1498px;top:783px;width:8px;height:48px;background:#c8cdd6;border-radius:4px;"></div>
<svg class="b" style="left:539.9px;top:787px;" width="30" height="28" viewBox="0 0 30 28" fill="none"><g stroke="#c3c8cf" stroke-width="2.7" stroke-linecap="round" stroke-linejoin="round"><path d="M7.8 23 V5.2M1.9 11 L7.8 5 L13.7 11"/><path d="M21.3 4.8 V23M15.6 17.2 L21.3 23 L27 17.2"/></g></svg>
<div class="t" style="left:1535.20px;top:790.00px;font-size:23.5px;line-height:29px;color:#8e949d;font-family:'Liberation Mono', monospace;font-weight:700;-webkit-text-stroke:0.7px #8e949d;transform:scaleX(0.7875);transform-origin:0 0;">Abc</div>
<div class="t" style="left:1577.58px;top:789.50px;font-size:24px;line-height:29px;color:#0c0c0c;font-family:'Liberation Sans', sans-serif;font-weight:700;letter-spacing:-0.165px;">DAYS_EMPLOYED</div>
<svg class="b" style="left:1791.9px;top:788.9px;" width="30" height="28" viewBox="0 0 30 28" fill="none"><g stroke="#c8ccd2" stroke-width="2.7" stroke-linecap="round" stroke-linejoin="round"><path d="M7.8 23 V5.2M1.9 11 L7.8 5 L13.7 11"/><path d="M21.3 4.8 V23M15.6 17.2 L21.3 23 L27 17.2"/></g></svg>
<div class="t" style="left:535.36px;top:868.50px;font-size:24.5px;line-height:30px;color:#0c1232;font-family:'Liberation Sans', sans-serif;letter-spacing:1.820px;-webkit-text-stroke:0.3px #0c1232;">dtype</div>
<div class="t" style="left:1530.53px;top:868.50px;font-size:24.5px;line-height:30px;color:#0c1232;font-family:'Liberation Sans', sans-serif;letter-spacing:1.036px;-webkit-text-stroke:0.3px #0c1232;">INT</div>
<div class="t" style="left:534.81px;top:947.70px;font-size:24.5px;line-height:30px;color:#0c1232;font-family:'Liberation Sans', sans-serif;letter-spacing:1.295px;-webkit-text-stroke:0.3px #0c1232;">unique</div>
<div class="t" style="left:1532.25px;top:947.70px;font-size:24.5px;line-height:30px;color:#0c1232;font-family:'Liberation Sans', sans-serif;letter-spacing:1.975px;-webkit-text-stroke:0.3px #0c1232;">4247</div>
<div class="t" style="left:536.84px;top:1026.70px;font-size:24.5px;line-height:30px;color:#0c1232;font-family:'Liberation Sans', sans-serif;letter-spacing:1.084px;-webkit-text-stroke:0.3px #0c1232;">%missing</div>
<div class="t" style="left:1531.82px;top:1026.70px;font-size:24.5px;line-height:30px;color:#0c1232;font-family:'Liberation Sans', sans-serif;-webkit-text-stroke:0.3px #0c1232;">0</div>
<div class="t" style="left:536.84px;top:1105.70px;font-size:24.5px;line-height:30px;color:#0c1232;font-family:'Liberation Sans', sans-serif;letter-spacing:1.323px;-webkit-text-stroke:0.3px #0c1232;">%empty</div>
<div class="b" style="left:1532px;top:1102px;width:84px;height:44px;background:#f2f3f6;border:2px solid #dde0e6;"></div>
<div class="t" style="left:1544.81px;top:1111.00px;font-size:23px;line-height:28px;color:#e55b5b;font-family:'Liberation Mono', monospace;font-weight:700;">null</div>
<div class="t" style="left:535.36px;top:1191.70px;font-size:24.5px;line-height:30px;color:#0c1232;font-family:'Liberation Sans', sans-serif;letter-spacing:1.066px;-webkit-text-stroke:0.3px #0c1232;">entropy</div>
<div class="b" style="left:1532px;top:1188px;width:84px;height:44px;background:#f2f3f6;border:2px solid #dde0e6;"></div>
<div class="t" style="left:1544.81px;top:1197.00px;font-size:23px;line-height:28px;color:#e55b5b;font-family:'Liberation Mono', monospace;font-weight:700;">null</div>
<div class="t" style="left:536.03px;top:1277.70px;font-size:24.5px;line-height:30px;color:#0c1232;font-family:'Liberation Sans', sans-serif;letter-spacing:1.496px;-webkit-text-stroke:0.3px #0c1232;">top</div>
<div class="t" style="left:1531.88px;top:1277.70px;font-size:24.5px;line-height:30px;color:#0c1232;font-family:'Liberation Sans', sans-serif;letter-spacing:1.670px;-webkit-text-stroke:0.3px #0c1232;">365243</div>
<div class="t" style="left:536.03px;top:1356.70px;font-size:24.5px;line-height:30px;color:#0c1232;font-family:'Liberation Sans', sans-serif;letter-spacing:2.033px;-webkit-text-stroke:0.3px #0c1232;">freq</div>
<div class="t" style="left:1530.96px;top:1356.70px;font-size:24.5px;line-height:30px;color:#0c1232;font-family:'Liberation Sans', sans-serif;letter-spacing:-0.300px;-webkit-text-stroke:0.3px #0c1232;transform:scaleX(0.9250);transform-origin:0 0;">1917</div>
<div class="t" style="left:534.75px;top:1435.70px;font-size:24.5px;line-height:30px;color:#0c1232;font-family:'Liberation Sans', sans-serif;letter-spacing:1.432px;-webkit-text-stroke:0.3px #0c1232;">mean</div>
<div class="t" style="left:1531.58px;top:1435.70px;font-size:24.5px;line-height:30px;color:#0c1232;font-family:'Liberation Sans', sans-serif;letter-spacing:1.607px;-webkit-text-stroke:0.3px #0c1232;">68063.2</div>
<div class="t" style="left:535.73px;top:1515.70px;font-size:24.5px;line-height:30px;color:#0c1232;font-family:'Liberation Sans', sans-serif;letter-spacing:1.979px;-webkit-text-stroke:0.3px #0c1232;">std</div>
<div class="t" style="left:1530.96px;top:1515.70px;font-size:24.5px;line-height:30px;color:#0c1232;font-family:'Liberation Sans', sans-serif;letter-spacing:0.551px;-webkit-text-stroke:0.3px #0c1232;">144747</div>
<div class="t" style="left:534.75px;top:1594.70px;font-size:24.5px;line-height:30px;color:#0c1232;font-family:'Liberation Sans', sans-serif;letter-spacing:2.101px;-webkit-text-stroke:0.3px #0c1232;">min</div>
<div class="t" style="left:1531.70px;top:1594.70px;font-size:24.5px;line-height:30px;color:#0c1232;font-family:'Liberation Sans', sans-serif;letter-spacing:0.354px;-webkit-text-stroke:0.3px #0c1232;">-17077</div>
<div class="t" style="left:535.17px;top:1673.70px;font-size:24.5px;line-height:30px;color:#0c1232;font-family:'Liberation Sans', sans-serif;letter-spacing:2.141px;-webkit-text-stroke:0.3px #0c1232;">25%</div>
<div class="t" style="left:1531.70px;top:1673.70px;font-size:24.5px;line-height:30px;color:#0c1232;font-family:'Liberation Sans', sans-serif;letter-spacing:0.496px;-webkit-text-stroke:0.3px #0c1232;">-2812.75</div>
<div class="t" style="left:535.42px;top:1752.70px;font-size:24.5px;line-height:30px;color:#0c1232;font-family:'Liberation Sans', sans-serif;letter-spacing:2.219px;-webkit-text-stroke:0.3px #0c1232;">50%</div>
<div class="t" style="left:1531.70px;top:1752.70px;font-size:24.5px;line-height:30px;color:#0c1232;font-family:'Liberation Sans', sans-serif;letter-spacing:0.830px;-webkit-text-stroke:0.3px #0c1232;">-1253.50</div>
<div class="t" style="left:535.11px;top:1831.70px;font-size:24.5px;line-height:30px;color:#0c1232;font-family:'Liberation Sans', sans-serif;letter-spacing:1.722px;-webkit-text-stroke:0.3px #0c1232;">75%</div>
<div class="t" style="left:1531.70px;top:1831.70px;font-size:24.5px;line-height:30px;color:#0c1232;font-family:'Liberation Sans', sans-serif;letter-spacing:1.101px;-webkit-text-stroke:0.3px #0c1232;">-272.750</div>
<div class="t" style="left:534.75px;top:1911.70px;font-size:24.5px;line-height:30px;color:#0c1232;font-family:'Liberation Sans', sans-serif;letter-spacing:1.477px;-webkit-text-stroke:0.3px #0c1232;">max</div>
<div class="t" style="left:1531.88px;top:1911.70px;font-size:24.5px;line-height:30px;color:#0c1232;font-family:'Liberation Sans', sans-serif;letter-spacing:1.670px;-webkit-text-stroke:0.3px #0c1232;">365243</div>
<svg class="b" style="left:3228px;top:678px;" width="48" height="48" viewBox="0 0 48 48" fill="none"><g stroke="#868c96" stroke-width="4" stroke-linecap="round"><circle cx="19.85" cy="18.85" r="13.9"/><path d="M29.7 28.7 L40.5 39.5"/></g></svg>
<svg class="b" style="left:3304px;top:684px;" width="42" height="36" viewBox="0 0 42 36" fill="none"><path d="M4.1 5 H14.9M25 5 H35.9" stroke="#868c96" stroke-width="4" stroke-linecap="round"/><path d="M4.1 13 H14.9M25 13 H35.9" stroke="#868c96" stroke-width="4" stroke-linecap="round"/><path d="M4.1 21 H14.9M25 21 H35.9" stroke="#868c96" stroke-width="4" stroke-linecap="round"/><path d="M4.1 29 H14.9M25 29 H35.9" stroke="#868c96" stroke-width="4" stroke-linecap="round"/></svg>
<div class="b" style="left:3364px;top:783px;width:8px;height:48px;background:#c4c9d1;border-radius:4px;"></div>
<div class="b" style="left:2538px;top:751px;width:820px;height:924px;background:#fff;border:2px solid #e4e7ec;border-radius:16px;box-shadow:0 4px 14px rgba(0,0,0,0.04);"></div>
<div class="b" style="left:2564px;top:777px;width:539px;height:72px;border:2px solid #c5cad3;border-radius:36px;background:#fff;"></div>
<svg class="b" style="left:2576px;top:789px;" width="48" height="48" viewBox="0 0 48 48" fill="none"><g stroke="#a8aeb7" stroke-width="3.8" stroke-linecap="round"><circle cx="19.9" cy="19.9" r="14"/><path d="M29.8 29.8 L42.6 42.6"/></g></svg>
<div class="t" style="left:2638.09px;top:798.50px;font-size:24.4px;line-height:30px;color:#0c1232;font-family:'Liberation Sans', sans-serif;letter-spacing:-0.256px;-webkit-text-stroke:0.5px #0c1232;">DAY</div>
<svg class="b" style="left:3056px;top:801px;" width="24" height="24" viewBox="0 0 24 24" fill="none"><path d="M4.2 4.2 L19.9 19.8M19.9 4.2 L4.2 19.8" stroke="#7a808a" stroke-width="2.6" stroke-linecap="round"/></svg>
<div class="t" style="left:3139.43px;top:796.50px;font-size:28.5px;line-height:35px;color:#858b95;font-family:'Liberation Sans', sans-serif;font-weight:700;letter-spacing:-0.199px;">6/113 columns</div>
<div class="b" style="left:2580px;top:865px;width:84px;height:40px;background:#eaecef;border:2px solid #dfe2e6;border-radius:20px;"></div>
<div class="b" style="left:2586px;top:871px;width:28px;height:28px;background:#fff;border:2px solid #dee1e6;border-radius:50%;"></div>
<div class="t" style="left:2687.90px;top:870.30px;font-size:24.4px;line-height:30px;color:#0c1232;font-family:'Liberation Sans', sans-serif;letter-spacing:0.667px;-webkit-text-stroke:0.35px #0c1232;">Show / Hide All Columns</div>
<div class="b" style="left:2548px;top:915px;width:800px;height:64px;background:#f2f3f5;border-radius:14px;"></div>
<div class="b" style="left:2580px;top:927px;width:84px;height:40px;background:#3b76f5;border-radius:20px;"></div>
<div class="b" style="left:2630px;top:933px;width:28px;height:28px;background:#fff;border-radius:50%;"></div>
<div class="t" style="left:2687.75px;top:931.50px;font-size:24.8px;line-height:30px;color:#0c1232;font-family:'Liberation Sans', sans-serif;-webkit-text-stroke:0.35px #0c1232;transform:scaleX(0.9520);transform-origin:0 0;">DAYS_EMPLOYED</div>
<div class="b" style="left:2580px;top:991px;width:84px;height:40px;background:#eaecef;border:2px solid #dfe2e6;border-radius:20px;"></div>
<div class="b" style="left:2586px;top:997px;width:28px;height:28px;background:#fff;border:2px solid #dee1e6;border-radius:50%;"></div>
<div class="t" style="left:2687.75px;top:995.50px;font-size:24.8px;line-height:30px;color:#0c1232;font-family:'Liberation Sans', sans-serif;-webkit-text-stroke:0.35px #0c1232;transform:scaleX(0.9561);transform-origin:0 0;">DAYS_REGISTRATION</div>
<div class="b" style="left:2580px;top:1055px;width:84px;height:40px;background:#eaecef;border:2px solid #dfe2e6;border-radius:20px;"></div>
<div class="b" style="left:2586px;top:1061px;width:28px;height:28px;background:#fff;border:2px solid #dee1e6;border-radius:50%;"></div>
<div class="t" style="left:2687.75px;top:1059.50px;font-size:24.8px;line-height:30px;color:#0c1232;font-family:'Liberation Sans', sans-serif;-webkit-text-stroke:0.35px #0c1232;transform:scaleX(0.9550);transform-origin:0 0;">DAYS_ID_PUBLISH</div>
<div class="b" style="left:2580px;top:1119px;width:84px;height:40px;background:#eaecef;border:2px solid #dfe2e6;border-radius:20px;"></div>
<div class="b" style="left:2586px;top:1125px;width:28px;height:28px;background:#fff;border:2px solid #dee1e6;border-radius:50%;"></div>
<div class="t" style="left:2688.18px;top:1123.50px;font-size:24.8px;line-height:30px;color:#0c1232;font-family:'Liberation Sans', sans-serif;-webkit-text-stroke:0.35px #0c1232;transform:scaleX(0.9328);transform-origin:0 0;">WEEKDAY_APPR_PROCESS_START</div>
<div class="b" style="left:2580px;top:1183px;width:84px;height:40px;background:#eaecef;border:2px solid #dfe2e6;border-radius:20px;"></div>
<div class="b" style="left:2586px;top:1189px;width:28px;height:28px;background:#fff;border:2px solid #dee1e6;border-radius:50%;"></div>
<div class="t" style="left:2687.75px;top:1187.50px;font-size:24.8px;line-height:30px;color:#0c1232;font-family:'Liberation Sans', sans-serif;-webkit-text-stroke:0.35px #0c1232;transform:scaleX(0.9498);transform-origin:0 0;">DAYS_LAST_PHONE_CHANGE</div>
<div class="b" style="left:2580px;top:1247px;width:84px;height:40px;background:#eaecef;border:2px solid #dfe2e6;border-radius:20px;"></div>
<div class="b" style="left:2586px;top:1253px;width:28px;height:28px;background:#fff;border:2px solid #dee1e6;border-radius:50%;"></div>
<div class="t" style="left:2688.24px;top:1251.50px;font-size:24.8px;line-height:30px;color:#0c1232;font-family:'Liberation Sans', sans-serif;-webkit-text-stroke:0.35px #0c1232;transform:scaleX(0.9229);transform-origin:0 0;">AMT_REQ_CREDIT_BUREAU_DAY</div>
<div class="b" style="left:3328px;top:2016px;width:100px;height:100px;background:#3876f2;border-radius:50%;box-shadow:0 3px 8px rgba(0,0,0,0.18);"></div>
<div class="t" style="left:3360.27px;top:2031.30px;font-size:59.5px;line-height:72px;color:#fff;font-family:'Liberation Sans', sans-serif;font-weight:700;">?</div>
</div>
</body></html>
